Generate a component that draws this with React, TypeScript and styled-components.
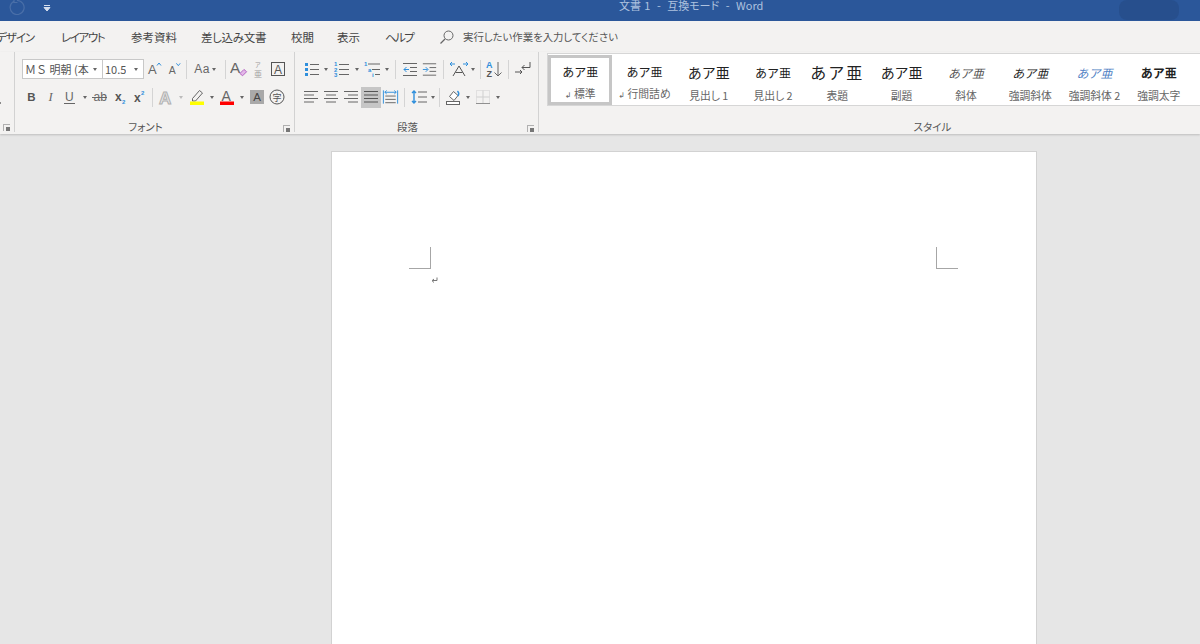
import React from "react";
import styled, { createGlobalStyle } from "styled-components";

const INK = "#666666";
const BLUE = "#2f8fdc";
const UI_FONT = `"Noto Sans CJK JP", "Liberation Sans", sans-serif`;
const LATIN = "Liberation Sans, sans-serif";

const GlobalStyle = createGlobalStyle`
    html, body {
        margin: 0;
        height: 100%;
        overflow: hidden;
        background: #e6e6e6;
        font-family: ${UI_FONT};
        font-feature-settings: "palt";
    }
`;

const Ico = ({ children, w = 20 }: { children: React.ReactNode; w?: number }) => (
    <svg width={w} height="20" viewBox={`0 0 ${w} 20`} fill="none">
        {children}
    </svg>
);

const T = ({ x, y, s, c = INK, w, st, f = LATIN, children }: { x: number; y: number; s: number; c?: string; w?: number; st?: string; f?: string; children: React.ReactNode }) => (
    <text x={x} y={y} fontSize={s} fill={c} fontWeight={w} fontStyle={st} fontFamily={f}>
        {children}
    </text>
);

const Stroke = ({ d, c = INK, w = 1 }: { d: string; c?: string; w?: number }) => <path d={d} stroke={c} strokeWidth={w} />;

const GrowFont = () => (
    <Ico>
        <T x={3} y={15} s={13}>A</T>
        <Stroke d="M12 6.5l2-2.5 2 2.5" c={BLUE} />
    </Ico>
);
const ShrinkFont = () => (
    <Ico>
        <T x={4} y={15} s={11}>A</T>
        <Stroke d="M12 4l2 2.5 2-2.5" c={BLUE} />
    </Ico>
);
const ClearFormat = () => (
    <Ico>
        <T x={0} y={14} s={17}>A</T>
        <path d="M11 15l4.5-4.5 3 2.5-4.5 4.5z" fill="#e3b8e8" stroke="#b05cc0" />
    </Ico>
);
const Furigana = () => (
    <Ico>
        <T x={7} y={8} s={6} c="#999999" f={UI_FONT}>ア</T>
        <T x={6} y={17.5} s={8} c="#a0a0a0" f={UI_FONT}>亜</T>
    </Ico>
);
const EncloseBox = () => (
    <Ico>
        <rect x="3.5" y="3.5" width="13" height="13" stroke="#555555" />
        <T x={6} y={14.5} s={12} c="#555555">A</T>
    </Ico>
);
const SubScript = () => (
    <Ico>
        <T x={5} y={14} s={12} c="#555555" w={700}>x</T>
        <T x={12} y={17} s={6} c={BLUE} w={700}>2</T>
    </Ico>
);
const SuperScript = () => (
    <Ico>
        <T x={4} y={15} s={12} c="#555555" w={700}>x</T>
        <T x={11} y={8} s={6} c={BLUE} w={700}>2</T>
    </Ico>
);
const Underline = () => (
    <Ico>
        <T x={5} y={13.5} s={12}>U</T>
        <Stroke d="M4 16.5h11" />
    </Ico>
);
const Strike = () => (
    <Ico>
        <T x={3.5} y={14} s={12}>ab</T>
        <Stroke d="M2 10.5h15" />
    </Ico>
);
const TextEffect = () => (
    <svg width="20" height="20" viewBox="0 0 20 20">
        <text x="3" y="16.5" fontSize="17" fontWeight="700" fontFamily={LATIN} fill="#e8e8e8" stroke="#b0b0b0" strokeWidth="1">A</text>
    </svg>
);
const Highlighter = () => (
    <Ico>
        <path d="M5.5 11.5l7-8 3 2.5-7 8H5.5z" stroke={INK} fill="none" />
        <rect x="3" y="14.5" width="14" height="3.5" fill="#ffff00" />
    </Ico>
);
const FontColor = () => (
    <Ico>
        <T x={4.5} y={13.5} s={14}>A</T>
        <rect x="3" y="14.5" width="14" height="3.5" fill="#ff0000" />
    </Ico>
);
const Enclosed = () => (
    <Ico>
        <circle cx="10" cy="10" r="7" stroke="#555555" />
        <T x={5.5} y={13.5} s={9} c="#555555" f={UI_FONT}>字</T>
    </Ico>
);

const Bullets = () => (
    <Ico>
        <path d="M4 4h3v3H4zM4 9h3v3H4zM4 14h3v3H4z" fill={BLUE} />
        <Stroke d="M9 5.5h9M9 10.5h9M9 15.5h9" />
    </Ico>
);
const Numbered = () => (
    <Ico>
        <T x={3} y={7} s={6} c={BLUE} w={700}>1</T>
        <T x={3} y={12.5} s={6} c={BLUE} w={700}>2</T>
        <T x={3} y={18} s={6} c={BLUE} w={700}>3</T>
        <Stroke d="M8 5.5h10M8 10.5h10M8 15.5h10" />
    </Ico>
);
const Multilevel = () => (
    <Ico>
        <T x={2} y={7} s={6} c={BLUE} w={700}>1</T>
        <T x={6} y={12.5} s={6} c={BLUE} w={700}>a</T>
        <T x={10} y={18} s={6} c={BLUE} w={700}>i</T>
        <Stroke d="M6 5h12M10 10.5h8M13 15.5h5" />
    </Ico>
);
const Outdent = () => (
    <Ico>
        <Stroke d="M3 4.5h14M10 8.5h7M10 12.5h7M3 16.5h14" />
        <Stroke d="M9 10.5H4M6.5 8l-2.5 2.5 2.5 2.5" c={BLUE} />
    </Ico>
);
const Indent = () => (
    <Ico>
        <Stroke d="M3 4.5h14M10 8.5h7M10 12.5h7M3 16.5h14" />
        <Stroke d="M3 10.5h5M6 8l2.5 2.5L6 13" c={BLUE} />
    </Ico>
);
const TextDirection = () => (
    <Ico>
        <Stroke d="M4 17l6-10 6 10M6.5 13.5h7" c="#555555" />
        <Stroke d="M1 5h5M3 3L1 5l2 2M14 5h5M17 3l2 2-2 2" c={BLUE} />
    </Ico>
);
const SortAZ = () => (
    <Ico>
        <T x={2} y={9} s={9} c={BLUE} w={700}>A</T>
        <T x={2.5} y={18} s={9} c="#555555" w={700}>Z</T>
        <Stroke d="M14 3v14M10.5 13.5L14 17l3.5-3.5" />
    </Ico>
);
const ParagraphMark = () => (
    <Ico>
        <Stroke d="M17 3v5.5H9M11.5 6L9 8.5l2.5 2.5" c="#555555" />
        <Stroke d="M2 13h7M7 11l2 2-2 2" c="#555555" />
    </Ico>
);
const AlignLeft = () => (
    <Ico>
        <Stroke d="M3 4.5h14M3 8h10M3 11.5h14M3 15h10" />
    </Ico>
);
const AlignCenter = () => (
    <Ico>
        <Stroke d="M3 4.5h14M5 8h10M3 11.5h14M5 15h10" />
    </Ico>
);
const AlignRight = () => (
    <Ico>
        <Stroke d="M3 4.5h14M7 8h10M3 11.5h14M7 15h10" />
    </Ico>
);
const Justify = () => (
    <Ico>
        <Stroke d="M3 4.5h14M3 8h14M3 11.5h14M3 15h14" c="#555555" />
    </Ico>
);
const Distribute = () => (
    <Ico>
        <Stroke d="M2.5 3v14M17.5 3v14" c={BLUE} />
        <Stroke d="M4 5h12M6 3.2L4 5l2 1.8M14 3.2L16 5l-2 1.8" c={BLUE} />
        <Stroke d="M4.5 9h11M4.5 12.5h11M4.5 16h11" />
    </Ico>
);
const LineSpacing = () => (
    <Ico>
        <Stroke d="M5 4v12M3 6l2-2 2 2M3 14l2 2 2-2" c={BLUE} w={1.4} />
        <Stroke d="M9 5h9M9 10h9M9 15h9" />
    </Ico>
);
const Shading = () => (
    <Ico>
        <path d="M6.5 9.5l4-5 4.5 4-4 5z" stroke={INK} fill="#ffffff" />
        <path d="M14.5 4c1.5 1.5 1.5 3.5.5 5" stroke={BLUE} strokeWidth="1.4" />
        <rect x="3.5" y="14.5" width="13" height="3" stroke={INK} fill="#ffffff" />
    </Ico>
);
const Borders = () => (
    <Ico>
        <rect x="3.5" y="3.5" width="13" height="13" stroke="#cfcfcf" strokeDasharray="1 1" />
        <Stroke d="M10 3.5v13M3.5 10h13" c="#cfcfcf" />
        <Stroke d="M3 16.5h14" c="#909090" />
    </Ico>
);

const Launcher = styled.span`
    display: block;
    width: 7px;
    height: 7px;
    margin-top: 3px;
    box-sizing: border-box;
    border-left: 1px solid #b0b0b0;
    border-top: 1px solid #b0b0b0;
    background: linear-gradient(#777777, #777777) bottom right / 4px 4px no-repeat;
`;

const STYLES: { label: string; size: number; mark?: boolean; italic?: boolean; bold?: boolean; color?: string; spacing?: number }[] = [
    { label: "標準", size: 12, mark: true },
    { label: "行間詰め", size: 12, mark: true },
    { label: "見出し 1", size: 14 },
    { label: "見出し 2", size: 12 },
    { label: "表題", size: 16, spacing: 2 },
    { label: "副題", size: 14 },
    { label: "斜体", size: 12, italic: true, color: "#555555" },
    { label: "強調斜体", size: 12, italic: true },
    { label: "強調斜体 2", size: 12, italic: true, color: "#4f81c4" },
    { label: "強調太字", size: 12, bold: true },
];

export default function App() {
    return (
        <>
            <GlobalStyle />
            <Window>
                <TitleBar>
                    <QuickAccess>
                        <svg width="16" height="16" viewBox="0 0 16 16" fill="none">
                            <path d="M4.5 2.5a7 7 0 1 0 3.5-1M5 0v3.5h3.5" stroke="#4a6fa8" strokeWidth="1.2" />
                        </svg>
                        <svg width="8" height="7" viewBox="0 0 8 7">
                            <path d="M1 .5h6M1 2.5h6L4 6z" stroke="#d5dfef" fill="#d5dfef" strokeWidth="1" />
                        </svg>
                    </QuickAccess>
                    <DocTitle>文書 1 &nbsp;-&nbsp; 互換モード &nbsp;-&nbsp; Word</DocTitle>
                    <AccountBlob />
                </TitleBar>

                <TabRow>
                    <Tab $w={65} $shift={-4} $track={-1}>デザイン</Tab>
                    <Tab $w={70} $track={-1.4}>レイアウト</Tab>
                    <Tab $w={70}>参考資料</Tab>
                    <Tab $w={90} $track={-0.3}>差し込み文書</Tab>
                    <Tab $w={46}>校閲</Tab>
                    <Tab $w={48}>表示</Tab>
                    <Tab $w={54} $track={-1.6}>ヘルプ</Tab>
                    <svg width="16" height="16" viewBox="0 0 16 16" fill="none">
                        <circle cx="9.5" cy="6.5" r="4.5" stroke="#666666" />
                        <path d="M6 10l-4.5 4.5" stroke="#666666" strokeWidth="1.2" />
                    </svg>
                    <TellMe>実行したい作業を入力してください</TellMe>
                </TabRow>

                <Ribbon>
                    <Group $w={14}>
                        <GroupBody>
                            <Tick />
                        </GroupBody>
                        <GroupFooter $pad={4}>
                            <span />
                            <Launcher />
                        </GroupFooter>
                    </Group>

                    <Group $w={279} $pad={7}>
                        <GroupBody>
                            <Row>
                                <ComboBox $w={81}>
                                    <ComboText>ＭＳ 明朝 (本</ComboText>
                                    <Caret />
                                </ComboBox>
                                <ComboBox $w={41} $joined>
                                    <ComboText>10.5</ComboText>
                                    <Caret />
                                </ComboBox>
                                <Btn $w={21}><GrowFont /></Btn>
                                <Btn $w={19}><ShrinkFont /></Btn>
                                <Sep $l={2} $r={3} />
                                <Btn $w={30}>
                                    <CaseText>Aa</CaseText>
                                    <Caret />
                                </Btn>
                                <Sep $l={5} $r={4} />
                                <Btn $w={18}><ClearFormat /></Btn>
                                <Btn $w={20}><Furigana /></Btn>
                                <Btn $w={20}><EncloseBox /></Btn>
                            </Row>
                            <Row>
                                <Btn $w={19}><BoldGlyph>B</BoldGlyph></Btn>
                                <Btn $w={19}><ItalicGlyph>I</ItalicGlyph></Btn>
                                <Btn $w={20}><Underline /></Btn>
                                <Btn $w={10}><Caret /></Btn>
                                <Btn $w={20}><Strike /></Btn>
                                <Btn $w={20}><SubScript /></Btn>
                                <Btn $w={20}><SuperScript /></Btn>
                                <Sep $l={2} $r={3} />
                                <Btn $w={20}><TextEffect /></Btn>
                                <Btn $w={10}><Caret $light /></Btn>
                                <Btn $w={21}><Highlighter /></Btn>
                                <Btn $w={9}><Caret /></Btn>
                                <Btn $w={21}><FontColor /></Btn>
                                <Btn $w={10}><Caret /></Btn>
                                <ShadeGlyph>A</ShadeGlyph>
                                <Btn $w={20}><Enclosed /></Btn>
                            </Row>
                        </GroupBody>
                        <GroupFooter $pad={4}>
                            <GroupLabel>フォント</GroupLabel>
                            <Launcher />
                        </GroupFooter>
                    </Group>

                    <Group $w={243} $pad={6}>
                        <GroupBody>
                            <Row>
                                <Btn $w={20}><Bullets /></Btn>
                                <Btn $w={10}><Caret /></Btn>
                                <Btn $w={20}><Numbered /></Btn>
                                <Btn $w={11}><Caret /></Btn>
                                <Btn $w={20}><Multilevel /></Btn>
                                <Btn $w={9}><Caret /></Btn>
                                <Sep $l={4} $r={4} />
                                <Btn $w={20}><Outdent /></Btn>
                                <Btn $w={19}><Indent /></Btn>
                                <Sep $l={4} $r={5} />
                                <Btn $w={20}><TextDirection /></Btn>
                                <Btn $w={7}><Caret /></Btn>
                                <Sep $l={4} $r={3} />
                                <Btn $w={20}><SortAZ /></Btn>
                                <Sep $l={4} $r={4} />
                                <Btn $w={20}><ParagraphMark /></Btn>
                            </Row>
                            <Row>
                                <Btn $w={20}><AlignLeft /></Btn>
                                <Btn $w={20}><AlignCenter /></Btn>
                                <Btn $w={20}><AlignRight /></Btn>
                                <Btn $w={20} $active><Justify /></Btn>
                                <Btn $w={19}><Distribute /></Btn>
                                <Sep $l={4} $r={4} />
                                <Btn $w={20}><LineSpacing /></Btn>
                                <Btn $w={7}><Caret /></Btn>
                                <Sep $l={3} $r={3} />
                                <Btn $w={20}><Shading /></Btn>
                                <Btn $w={10}><Caret /></Btn>
                                <Btn $w={20}><Borders /></Btn>
                                <Btn $w={10}><Caret /></Btn>
                            </Row>
                        </GroupBody>
                        <GroupFooter $pad={4}>
                            <GroupLabel>段落</GroupLabel>
                            <Launcher />
                        </GroupFooter>
                    </Group>

                    <Group $w={786} $last>
                        <Gallery>
                            {STYLES.map((s, i) => (
                                <StyleCard key={s.label} $selected={i === 0}>
                                    <Preview $size={s.size} $italic={s.italic} $bold={s.bold} $color={s.color} $spacing={s.spacing}>
                                        あア亜
                                    </Preview>
                                    <StyleLabel>
                                        {s.mark && <Mark>↲ </Mark>}
                                        {s.label}
                                    </StyleLabel>
                                </StyleCard>
                            ))}
                        </Gallery>
                        <StyleFooter>
                            <GroupLabel>スタイル</GroupLabel>
                        </StyleFooter>
                    </Group>
                </Ribbon>

                <Workspace>
                    <Page>
                        <Margins>
                            <CropMark $side="right" />
                            <CropMark $side="left" />
                        </Margins>
                        <ReturnMark>
                            <svg width="7" height="7" viewBox="0 0 7 7" fill="none">
                                <path d="M6 .5v3H1.5M3 2L1 3.7 3 5.5" stroke="#777777" />
                            </svg>
                        </ReturnMark>
                    </Page>
                </Workspace>
            </Window>
        </>
    );
}

const Window = styled.div`
    width: 1200px;
    height: 644px;
    display: flex;
    flex-direction: column;
    overflow: hidden;
    background: #e6e6e6;
`;

const TitleBar = styled.div`
    height: 21px;
    flex-shrink: 0;
    display: flex;
    align-items: flex-start;
    overflow: hidden;
    background: #2b579a;
`;

const QuickAccess = styled.div`
    width: 619px;
    flex-shrink: 0;
    display: flex;
    align-items: flex-start;
    gap: 18px;
    padding-left: 9px;
    box-sizing: border-box;

    svg:first-child {
        margin-top: -1px;
    }

    svg:last-child {
        margin-top: 5px;
    }
`;

const DocTitle = styled.div`
    font-size: 11px;
    line-height: 11px;
    color: #aec2df;
    white-space: nowrap;
    word-spacing: 0.8px;
`;

const AccountBlob = styled.div`
    width: 60px;
    height: 20px;
    margin-left: auto;
    margin-right: 21px;
    border-radius: 8px;
    background: #274f8d;
`;

const TabRow = styled.div`
    height: 31px;
    flex-shrink: 0;
    display: flex;
    align-items: center;
    background: #f3f2f1;
`;

const Tab = styled.div<{ $w: number; $shift?: number; $track?: number }>`
    width: ${({ $w }) => $w}px;
    flex-shrink: 0;
    margin-left: ${({ $shift }) => $shift ?? 0}px;
    font-size: 11.5px;
    letter-spacing: ${({ $track }) => $track ?? 0}px;
    color: #444444;
    white-space: nowrap;
`;

const TellMe = styled.div`
    margin-left: 8px;
    font-size: 10.4px;
    color: #555555;
    white-space: nowrap;
`;

const Ribbon = styled.div`
    height: 82px;
    flex-shrink: 0;
    display: flex;
    background: #f3f2f1;
    box-shadow: 0 1px 2px rgba(0, 0, 0, 0.18);
`;

const Group = styled.div<{ $w: number; $pad?: number; $last?: boolean }>`
    width: ${({ $w }) => $w}px;
    flex-shrink: 0;
    display: flex;
    flex-direction: column;
    height: 80px;
    border-right: ${({ $last }) => ($last ? "none" : "1px solid #d2d2d2")};

    & > div:first-child {
        padding-left: ${({ $pad }) => $pad ?? 0}px;
    }
`;

const GroupBody = styled.div`
    flex: none;
    height: 59px;
    padding-top: 3px;
    box-sizing: border-box;
    display: flex;
    flex-direction: column;
`;

const Tick = styled.span`
    width: 1px;
    height: 2px;
    margin-top: 47px;
    background: #8a8a8a;
`;

const GroupFooter = styled.div<{ $pad: number }>`
    height: 15px;
    margin-top: 8px;
    padding-right: ${({ $pad }) => $pad}px;
    display: grid;
    grid-template-columns: 1fr 7px;
    align-items: center;
    justify-items: center;

    & > div {
        padding-right: 7px;
    }
`;

const StyleFooter = styled.div`
    height: 15px;
    margin-top: 13px;
    padding-left: 1px;
    display: flex;
    justify-content: center;
    align-items: center;
`;

const GroupLabel = styled.div`
    font-size: 10.5px;
    color: #555555;
    white-space: nowrap;
`;

const Row = styled.div`
    height: 28px;
    flex-shrink: 0;
    display: flex;
    align-items: center;
`;

const Btn = styled.span<{ $w: number; $active?: boolean }>`
    width: ${({ $w }) => $w}px;
    height: 21px;
    flex-shrink: 0;
    display: flex;
    align-items: center;
    justify-content: center;
    background: ${({ $active }) => ($active ? "#c6c6c6" : "transparent")};
`;

const Caret = styled.span<{ $light?: boolean }>`
    display: block;
    flex-shrink: 0;
    border-left: 2.5px solid transparent;
    border-right: 2.5px solid transparent;
    border-top: 3px solid ${({ $light }) => ($light ? "#bcbcbc" : "#666666")};
`;

const Sep = styled.span<{ $l: number; $r: number }>`
    width: 1px;
    height: 19px;
    flex-shrink: 0;
    margin-left: ${({ $l }) => $l}px;
    margin-right: ${({ $r }) => $r}px;
    background: #d4d4d4;
`;

const ComboBox = styled.div<{ $w: number; $joined?: boolean }>`
    width: ${({ $w }) => $w}px;
    height: 20px;
    flex-shrink: 0;
    box-sizing: border-box;
    display: flex;
    align-items: center;
    justify-content: space-between;
    padding: 0 5px 0 2px;
    background: #ffffff;
    border: 1px solid #c8c8c8;
    border-left: ${({ $joined }) => ($joined ? "none" : "1px solid #c8c8c8")};
`;

const ComboText = styled.span`
    font-size: 11px;
    color: #555555;
    white-space: nowrap;
    overflow: hidden;
    font-feature-settings: normal;
`;

const CaseText = styled.span`
    font-family: ${LATIN};
    font-size: 12px;
    color: #666666;
    letter-spacing: 0.5px;
    margin-right: 2px;
`;

const BoldGlyph = styled.span`
    font-family: ${LATIN};
    font-size: 11.5px;
    font-weight: 700;
    color: #555555;
`;

const ItalicGlyph = styled.span`
    font-family: "Liberation Serif", serif;
    font-size: 12.5px;
    font-style: italic;
    color: #666666;
`;

const ShadeGlyph = styled.span`
    width: 14px;
    height: 14px;
    flex-shrink: 0;
    margin: 0 3px;
    display: flex;
    align-items: center;
    justify-content: center;
    background: #a9a9a9;
    color: #444444;
    font-family: ${LATIN};
    font-size: 11.5px;
`;

const Gallery = styled.div`
    height: 54px;
    margin: 1px 0 0 8px;
    box-sizing: border-box;
    display: flex;
    background: #ffffff;
    border: 1px solid #d6d6d6;
    border-right: none;
`;

const StyleCard = styled.div<{ $selected?: boolean }>`
    width: 64.3px;
    height: 50px;
    flex-shrink: 0;
    box-sizing: border-box;
    margin-top: 1px;
    display: flex;
    flex-direction: column;
    align-items: center;
    border: 3px solid ${({ $selected }) => ($selected ? "#c6c6c6" : "transparent")};
`;

const Preview = styled.div<{ $size: number; $italic?: boolean; $bold?: boolean; $color?: string; $spacing?: number }>`
    height: 26px;
    margin-top: 1px;
    display: flex;
    align-items: center;
    white-space: nowrap;
    font-size: ${({ $size }) => $size}px;
    font-style: ${({ $italic }) => ($italic ? "italic" : "normal")};
    font-weight: ${({ $bold }) => ($bold ? 700 : 400)};
    color: ${({ $color }) => $color ?? "#222222"};
    letter-spacing: ${({ $spacing }) => $spacing ?? 0}px;
    font-feature-settings: normal;
`;

const StyleLabel = styled.div`
    margin-top: 4px;
    font-size: 10.8px;
    line-height: 12px;
    color: #666666;
    white-space: nowrap;
`;

const Mark = styled.span`
    font-family: "DejaVu Sans", sans-serif;
    font-size: 8px;
`;

const Workspace = styled.div`
    flex: 1;
    min-height: 0;
    padding: 17px 0 0 331px;
`;

const Page = styled.div`
    width: 704px;
    height: 600px;
    background: #ffffff;
    border: 1px solid #d2d2d2;
    padding-top: 95px;
`;

const Margins = styled.div`
    display: flex;
    justify-content: space-between;
    padding: 0 78px 0 77px;
`;

const CropMark = styled.div<{ $side: "left" | "right" }>`
    width: 21px;
    height: 21px;
    border-bottom: 1px solid #a6a6a6;
    border-${({ $side }) => $side}: 1px solid #a6a6a6;
`;

const ReturnMark = styled.div`
    padding: 8px 0 0 99px;
    line-height: 0;
`;
